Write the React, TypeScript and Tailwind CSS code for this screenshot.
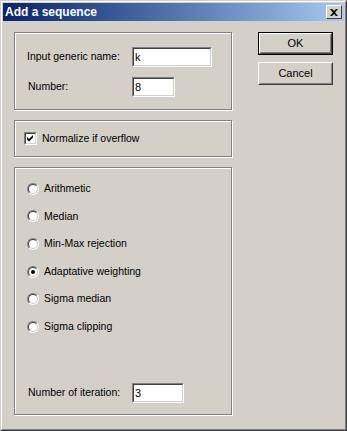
import { useState } from "react";

const font = { fontFamily: '"Liberation Sans", Arial, sans-serif' };

function Field({ value, width }: { value: string; width: string }) {
  // sunken edit box
  return (
    <div className={`${width} h-[20px] border border-t-[#808080] border-l-[#808080] border-r-white border-b-white`}>
      <div className="h-full border border-t-[#404040] border-l-[#404040] border-r-[#d4d0c8] border-b-[#d4d0c8] bg-white pl-[1px] text-[11px] leading-[16px] text-black">
        {value}
      </div>
    </div>
  );
}

function Radio({ label, checked }: { label: string; checked?: boolean }) {
  return (
    <div className="h-[27.6px] flex items-center">
      <div className="w-[12px] h-[12px] rounded-full border border-t-[#808080] border-l-[#808080] border-r-white border-b-white">
        <div className="w-full h-full rounded-full border border-t-[#404040] border-l-[#404040] border-r-[#d4d0c8] border-b-[#d4d0c8] bg-white flex items-center justify-center">
          {checked && <div className="w-[4px] h-[4px] rounded-full bg-black" />}
        </div>
      </div>
      <span className="ml-[5px] text-[10.5px] text-black">{label}</span>
    </div>
  );
}

function Button({ label, isDefault }: { label: string; isDefault?: boolean }) {
  return (
    <div className={`w-[75px] h-[23px] ${isDefault ? "border border-black" : ""}`}>
      <div className="h-full border border-t-white border-l-white border-r-[#404040] border-b-[#404040]">
        <div className="h-full border border-t-[#d4d0c8] border-l-[#d4d0c8] border-r-[#808080] border-b-[#808080] flex items-center justify-center text-[11px] text-black">
          {label}
        </div>
      </div>
    </div>
  );
}

export default function App() {
  const [method] = useState("Adaptative weighting");
  const methods = [
    "Arithmetic",
    "Median",
    "Min-Max rejection",
    "Adaptative weighting",
    "Sigma median",
    "Sigma clipping",
  ];

  return (
    <div style={font} className="w-[347px] h-[431px] bg-[#d4d0c8] border border-t-[#d4d0c8] border-l-[#d4d0c8] border-r-[#404040] border-b-[#404040]">
      <div className="h-full border border-t-white border-l-white border-r-[#808080] border-b-[#808080] p-[1px] flex flex-col">
        {/* title bar */}
        <div className="h-[18px] flex items-center bg-gradient-to-r from-[#0a246a] to-[#a6caf0] pl-[2px] pr-[2px]">
          <span className="text-white font-bold text-[12px] flex-1">Add a sequence</span>
          <div className="w-[16px] h-[14px] bg-[#d4d0c8] border border-t-white border-l-white border-r-[#404040] border-b-[#404040] flex items-center justify-center">
            <svg width="8" height="7" viewBox="0 0 8 7">
              <path d="M0 0h2l2 2 2-2h2L5 3.5 8 7H6L4 5 2 7H0l3-3.5z" fill="black" />
            </svg>
          </div>
        </div>

        <div className="flex pt-[11px] pl-[11px]">
          {/* left column */}
          <div className="w-[218px] flex flex-col">
            <div className="h-[78px] border border-[#808080] shadow-[1px_1px_0_#fff,inset_1px_1px_0_#fff] pt-[14px] pl-[12px] flex flex-col gap-[10px]">
              <div className="flex items-center">
                <span className="w-[105px] text-[10.5px] text-black">Input generic name:</span>
                <Field value="k" width="w-[80px]" />
              </div>
              <div className="flex items-center">
                <span className="w-[105px] pl-[1px] text-[10.5px] text-black">Number:</span>
                <Field value="8" width="w-[43px]" />
              </div>
            </div>

            <div className="mt-[10px] h-[37px] border border-[#808080] shadow-[1px_1px_0_#fff,inset_1px_1px_0_#fff] pl-[9px] flex items-center">
              <div className="w-[13px] h-[13px] border border-t-[#808080] border-l-[#808080] border-r-white border-b-white">
                <div className="w-full h-full border border-t-[#404040] border-l-[#404040] border-r-[#d4d0c8] border-b-[#d4d0c8] bg-white">
                  <svg width="9" height="9" viewBox="0 0 9 9" className="block">
                    <path d="M1 3l2 2 4-4v2.5l-4 4-2-2z" fill="black" />
                  </svg>
                </div>
              </div>
              <span className="ml-[5px] text-[10.5px] text-black">Normalize if overflow</span>
            </div>

            <div className="mt-[10px] h-[248px] border border-[#808080] shadow-[1px_1px_0_#fff,inset_1px_1px_0_#fff] pl-[12px] pt-[7px] pb-[11px] flex flex-col">
              {methods.map((m) => (
                <Radio key={m} label={m} checked={m === method} />
              ))}
              <div className="mt-auto flex items-center">
                <span className="w-[105px] pl-[1px] text-[10.5px] text-black">Number of iteration:</span>
                <Field value="3" width="w-[52px]" />
              </div>
            </div>
          </div>

          {/* buttons */}
          <div className="ml-[26px] flex flex-col gap-[7px]">
            <Button label="OK" isDefault />
            <Button label="Cancel" />
          </div>
        </div>
      </div>
    </div>
  );
}
